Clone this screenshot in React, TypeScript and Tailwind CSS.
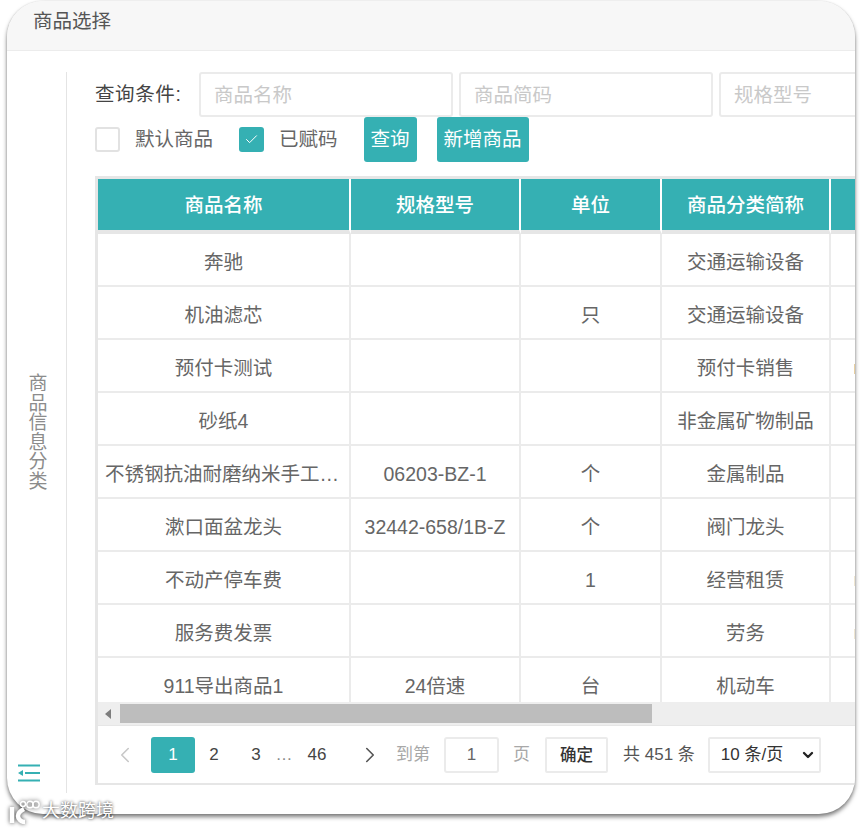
import React from "react";
import { ChevronLeft, ChevronRight, ChevronDown, Check } from "lucide-react";

const cjk = "font-['Liberation_Sans','Noto_Sans_CJK_SC',sans-serif]";

// mark: colour of the sliver of the next column that shows at the right edge
const rows = [
    { name: "奔驰", model: "", unit: "", category: "交通运输设备", mark: "" },
    { name: "机油滤芯", model: "", unit: "只", category: "交通运输设备", mark: "" },
    { name: "预付卡测试", model: "", unit: "", category: "预付卡销售", mark: "bg-[#e8cfa0]" },
    { name: "砂纸4", model: "", unit: "", category: "非金属矿物制品", mark: "" },
    { name: "不锈钢抗油耐磨纳米手工皂液", model: "06203-BZ-1", unit: "个", category: "金属制品", mark: "" },
    { name: "漱口面盆龙头", model: "32442-658/1B-Z", unit: "个", category: "阀门龙头", mark: "" },
    { name: "不动产停车费", model: "", unit: "1", category: "经营租赁", mark: "bg-[#efe6d2]" },
    { name: "服务费发票", model: "", unit: "", category: "劳务", mark: "bg-[#efe6d2]" },
    { name: "911导出商品1", model: "24倍速", unit: "台", category: "机动车", mark: "" },
];

const columns = ["商品名称", "规格型号", "单位", "商品分类简称", ""];

const SideToggle = () => (
    <svg width="24" height="20" viewBox="0 0 24 20" className="text-[#35b0b3]">
        <path d="M1 2.5h22M8 10h15M1 17.5h22" stroke="currentColor" strokeWidth="2" fill="none" />
        <path d="M1 10l5-3v6z" fill="currentColor" />
    </svg>
);

const Logo = () => (
    <svg width="31" height="24" viewBox="0 0 31 24" fill="none" stroke="#fff" className="drop-shadow-[0_0_2px_rgba(0,0,0,0.7)]">
        <path d="M3 7v16" strokeWidth="4.5" />
        <path d="M15 9c-4 2-6 4-6 7s3 6 7 6" strokeWidth="4.5" />
        <circle cx="14" cy="4" r="2.5" strokeWidth="1.4" />
        <circle cx="21" cy="4.5" r="3.2" strokeWidth="1.4" />
        <circle cx="27" cy="4.5" r="3.2" strokeWidth="1.4" />
    </svg>
);

const SearchInput = ({ placeholder, className }: { placeholder: string; className: string }) => (
    <div className={`h-[45px] shrink-0 rounded-[3px] border-2 border-[#ebebeb] bg-white pl-[13px] text-[19.5px] leading-[43px] text-[#c9c9c9] ${className}`}>
        {placeholder}
    </div>
);

export default function App() {
    return (
        <div className={`${cjk} relative h-[828px] w-[863px] overflow-hidden bg-white pl-[7px] pt-px`}>
            <div className="flex h-[813px] w-[848px] flex-col overflow-hidden rounded-[36px] bg-white shadow-[0_3px_4px_rgba(0,0,0,0.5),0_0_2px_rgba(0,0,0,0.15)]">
                <div className="h-[50px] shrink-0 border-b border-[#ececec] bg-[#f7f7f7] pl-[26px] text-[19.5px] leading-[40px] text-[#555]">
                    商品选择
                </div>
                <div className="flex min-h-0 flex-1">
                    <div className="mt-[21px] flex h-[721px] w-[60px] shrink-0 flex-col items-center border-r border-[#e4e4e4] pt-[302px]">
                        <div className="w-[20px] pl-[2px] text-center text-[19px] leading-[19.5px] text-[#8c8c8c]">商品信息分类</div>
                        <div className="mr-[16px] mt-[272px]">
                            <SideToggle />
                        </div>
                    </div>
                    <div className="ml-[28px] min-w-0 flex-1 pt-[21px]">
                        <div className="flex items-center">
                            <span className="w-[104px] shrink-0 text-[19.5px] tracking-[0.6px] text-[#444]">查询条件:</span>
                            <SearchInput placeholder="商品名称" className="w-[254px]" />
                            <SearchInput placeholder="商品简码" className="ml-[6px] w-[254px]" />
                            <SearchInput placeholder="规格型号" className="ml-[6px] w-[254px]" />
                        </div>
                        <div className="flex h-[45px] items-center">
                            <span className="h-[25px] w-[25px] shrink-0 rounded-[3px] border-2 border-[#e2e2e2] bg-white" />
                            <span className="ml-[15px] text-[19.5px] text-[#666]">默认商品</span>
                            <span className="ml-[26px] flex h-[25px] w-[25px] shrink-0 items-center justify-center rounded-[3px] bg-[#35b0b3]">
                                <Check size={15} strokeWidth={1.6} className="text-white" />
                            </span>
                            <span className="ml-[15px] text-[19.5px] text-[#666]">已赋码</span>
                            <span className="ml-[26px] flex h-[45px] w-[53px] items-center justify-center rounded-[3px] bg-[#35b0b3] text-[19.5px] text-white">查询</span>
                            <span className="ml-[20px] flex h-[45px] w-[92px] items-center justify-center rounded-[3px] bg-[#35b0b3] text-[19.5px] text-white">新增商品</span>
                        </div>
                        <div className="mt-[14px] h-[609px] w-[780px] border-y-[3px] border-l-[3px] border-y-[#e6e6e6] border-l-[#e6e6e6] border-b-2">
                            <div className="h-[523px] overflow-hidden">
                                <table className="w-[1000px] table-fixed border-separate border-spacing-0 text-[19.5px] text-[#666]">
                                    <colgroup>
                                        <col className="w-[253px]" />
                                        <col className="w-[170px]" />
                                        <col className="w-[141px]" />
                                        <col className="w-[169px]" />
                                        <col className="w-[267px]" />
                                    </colgroup>
                                    <thead>
                                        <tr>
                                            {columns.map((c, idx) => (
                                                <th key={idx} className="h-[55px] border-r-2 border-b-4 border-r-white border-b-[#e6e6e6] bg-[#35b0b3] pt-[2px] font-medium text-white">
                                                    {c}
                                                </th>
                                            ))}
                                        </tr>
                                    </thead>
                                    <tbody>
                                        {rows.map((r, idx) => (
                                            <tr key={idx}>
                                                <td className="h-[53px] truncate border-r-2 border-b-2 border-[#ebebeb] px-[7px] pt-[7px] text-center">{r.name}</td>
                                                <td className="h-[53px] border-r-2 border-b-2 border-[#ebebeb] pt-[7px] text-center">{r.model}</td>
                                                <td className="h-[53px] border-r-2 border-b-2 border-[#ebebeb] pt-[7px] text-center">{r.unit}</td>
                                                <td className="h-[53px] border-r-2 border-b-2 border-[#ebebeb] pt-[7px] text-center">{r.category}</td>
                                                <td className="h-[53px] border-b-2 border-[#ebebeb] pl-[23px] pt-[7px]">
                                                    {r.mark && <span className={`block h-[10px] w-[2px] ${r.mark}`} />}
                                                </td>
                                            </tr>
                                        ))}
                                    </tbody>
                                </table>
                            </div>
                            <div className="flex h-[23px] items-center bg-[#eeeeee]">
                                <div className="flex h-[19px] w-[22px] items-center pl-[7px]">
                                    <span className="border-y-[5px] border-r-[6px] border-y-transparent border-r-[#7d7d7d]" />
                                </div>
                                <div className="h-[19px] w-[532px] bg-[#bdbdbd]" />
                            </div>
                            <div className="flex h-[58px] items-center border-t border-[#e6e6e6] bg-white text-[#666]">
                                <ChevronLeft size={26} strokeWidth={1.5} className="ml-[14px] text-[#c8c8c8]" />
                                <span className="ml-[13px] flex h-[36px] w-[44px] items-center justify-center rounded-[3px] bg-[#35b0b3] text-[17px] text-white">1</span>
                                <span className="w-[38px] text-center text-[17px] text-[#444]">2</span>
                                <span className="ml-[4px] w-[38px] text-center text-[17px] text-[#444]">3</span>
                                <span className="w-[18px] text-center text-[17px] text-[#888]">…</span>
                                <span className="ml-[4px] w-[40px] text-center text-[17px] text-[#444]">46</span>
                                <ChevronRight size={26} strokeWidth={1.5} className="ml-[20px] text-[#555]" />
                                <span className="ml-[13px] text-[17px] text-[#a8a8a8]">到第</span>
                                <span className="ml-[14px] flex h-[36px] w-[55px] items-center justify-center rounded-[3px] border-2 border-[#ebebeb] text-[17px]">1</span>
                                <span className="ml-[14px] text-[17px] text-[#a8a8a8]">页</span>
                                <span className="ml-[15px] flex h-[36px] w-[63px] items-center justify-center rounded-[2px] border-2 border-[#ebebeb] pt-[2px] text-[16.5px] font-medium text-[#333]">确定</span>
                                <span className="ml-[15px] text-[17px] text-[#555]">共 451 条</span>
                                <span className="ml-[13px] flex h-[36px] w-[113px] items-center justify-between rounded-[2px] border-2 border-[#ebebeb] pl-[11px] pr-[3px] text-[17px] text-[#333]">
                                    10 条/页
                                    <ChevronDown size={16} strokeWidth={3.5} className="text-[#222]" />
                                </span>
                            </div>
                        </div>
                    </div>
                </div>
            </div>
            <div className="absolute left-[9px] top-[798px] flex items-center">
                <Logo />
                <span className="ml-[2px] text-[18px] text-white [text-shadow:0_0_3px_rgba(0,0,0,0.85)]">大数跨境</span>
            </div>
        </div>
    );
}
